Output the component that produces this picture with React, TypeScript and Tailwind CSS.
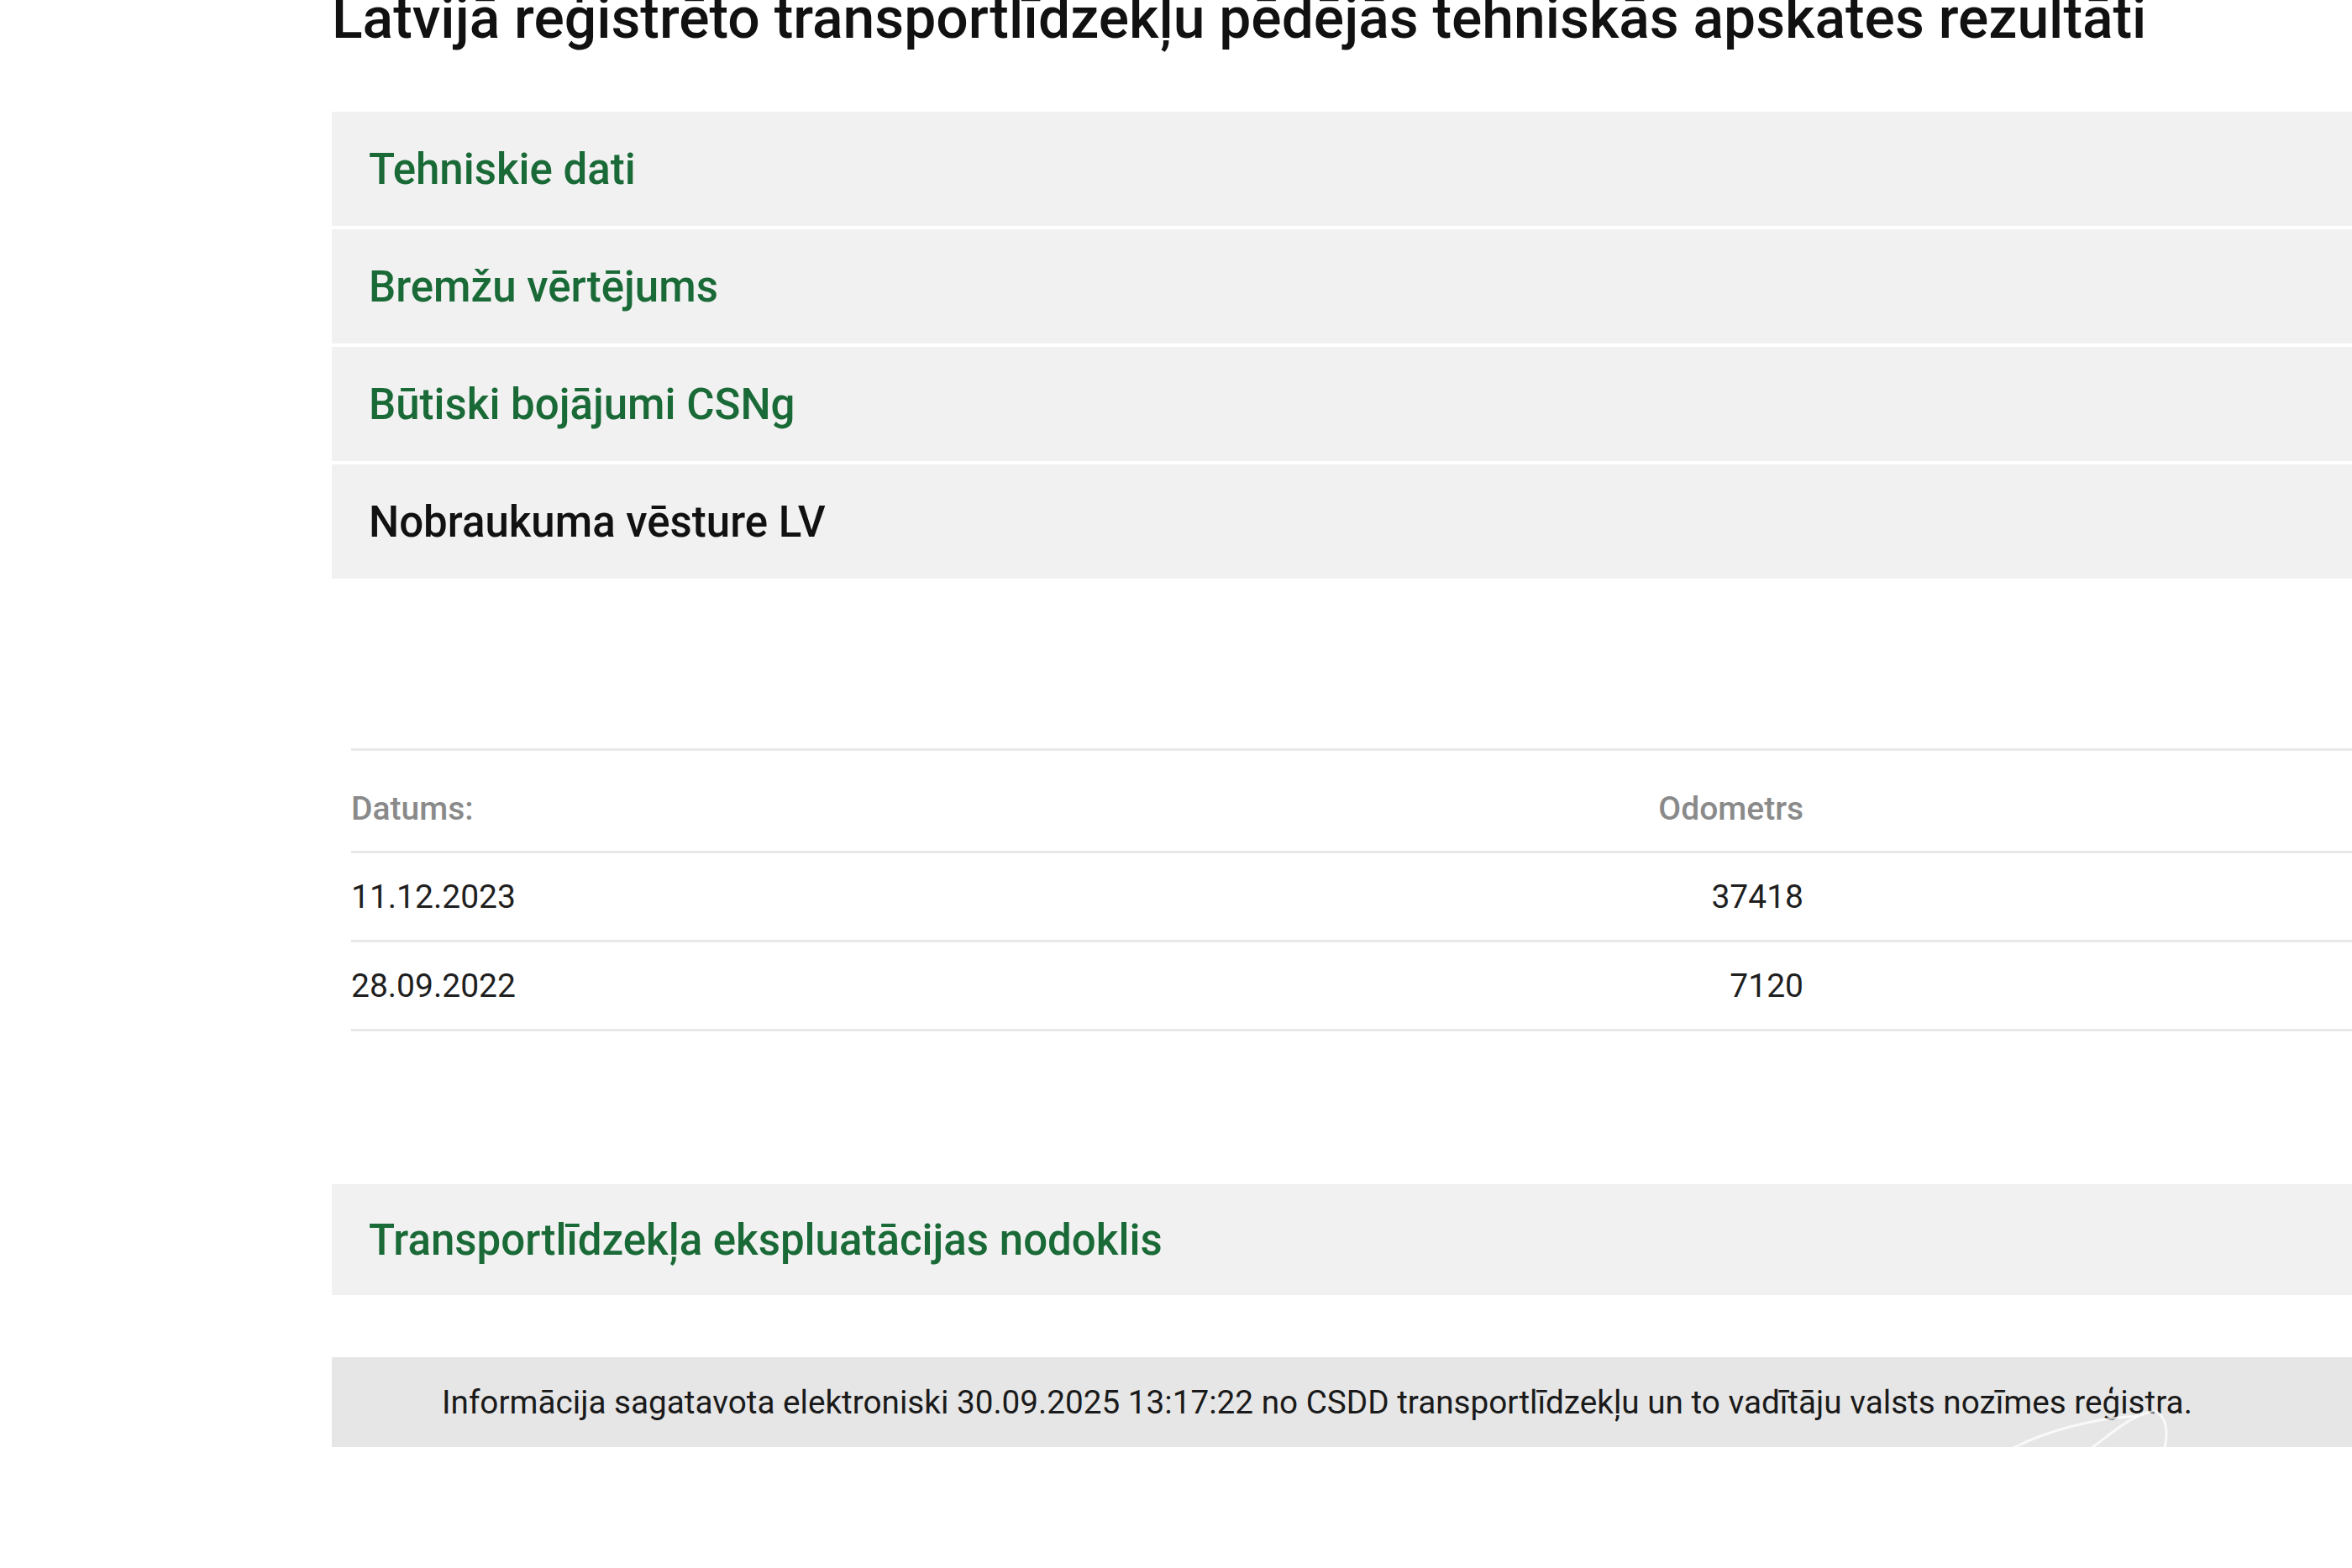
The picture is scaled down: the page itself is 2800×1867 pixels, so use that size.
import React from "react";

const sections = [
  { title: "Tehniskie dati", active: false },
  { title: "Bremžu vērtējums", active: false },
  { title: "Būtiski bojājumi CSNg", active: false },
  { title: "Nobraukuma vēsture LV", active: true },
];

const mileage = [
  { date: "11.12.2023", odo: "37418" },
  { date: "28.09.2022", odo: "7120" },
];

const SectionBar = ({ title, active, className = "" }: { title: string; active?: boolean; className?: string }) => (
  <div className={`flex items-center bg-[#f1f1f1] pl-[44px] ${className}`}>
    <span className={`text-[51px] font-medium leading-none ${active ? "text-[#111111]" : "text-[#1a6a37]"}`}>
      {title}
    </span>
  </div>
);

export default function App() {
  return (
    <div className="min-h-[1867px] overflow-hidden bg-white font-['Roboto','Liberation_Sans',sans-serif]">
      <div className="ml-[395px]">
        <h1 className="-mt-[18px] whitespace-nowrap text-[67.8px] font-medium leading-[80px] text-[#111111]">
          Latvijā reģistrēto transportlīdzekļu pēdējās tehniskās apskates rezultāti
        </h1>

        <div className="mt-[71px] flex flex-col gap-[4px]">
          {sections.map((s) => (
            <SectionBar key={s.title} title={s.title} active={s.active} className="h-[136px]" />
          ))}
        </div>

        {/* mileage table */}
        <div className="ml-[23px] mt-[202px] text-[39px]">
          <div className="flex h-[122px] border-t-[3px] border-[#e8e8e8]">
            <div className="flex w-[1729px] justify-between pt-[46px] font-medium leading-[46px] text-[#8a8a8a]">
              <span>Datums:</span>
              <span>Odometrs</span>
            </div>
          </div>
          {mileage.map((row) => (
            <div key={row.date} className="flex h-[106px] items-center border-t-[3px] border-[#e8e8e8] text-[#1f1f1f]">
              <div className="flex w-[1729px] justify-between leading-[46px]">
                <span>{row.date}</span>
                <span>{row.odo}</span>
              </div>
            </div>
          ))}
          <div className="border-t-[3px] border-[#e8e8e8]" />
        </div>

        <SectionBar title="Transportlīdzekļa ekspluatācijas nodoklis" className="mt-[182px] h-[132px]" />

        <div className="relative mt-[74px] flex h-[107px] items-center overflow-hidden bg-[#e6e6e6] pl-[131px]">
          <p className="whitespace-nowrap text-[38.7px] leading-[46px] text-[#1a1a1a]">
            Informācija sagatavota elektroniski 30.09.2025 13:17:22 no CSDD transportlīdzekļu un to vadītāju valsts nozīmes reģistra.
          </p>
          <svg
            className="absolute left-[2000px] top-[60px] h-[50px] w-[200px]"
            viewBox="0 0 200 50"
            fill="none"
          >
            <path d="M2 48 C40 28 100 12 150 10" stroke="#ffffff" strokeOpacity="0.75" strokeWidth="3" />
            <path d="M95 48 C120 30 140 10 170 4 C185 10 186 30 182 48" stroke="#ffffff" strokeOpacity="0.75" strokeWidth="3" />
          </svg>
        </div>
      </div>
    </div>
  );
}
